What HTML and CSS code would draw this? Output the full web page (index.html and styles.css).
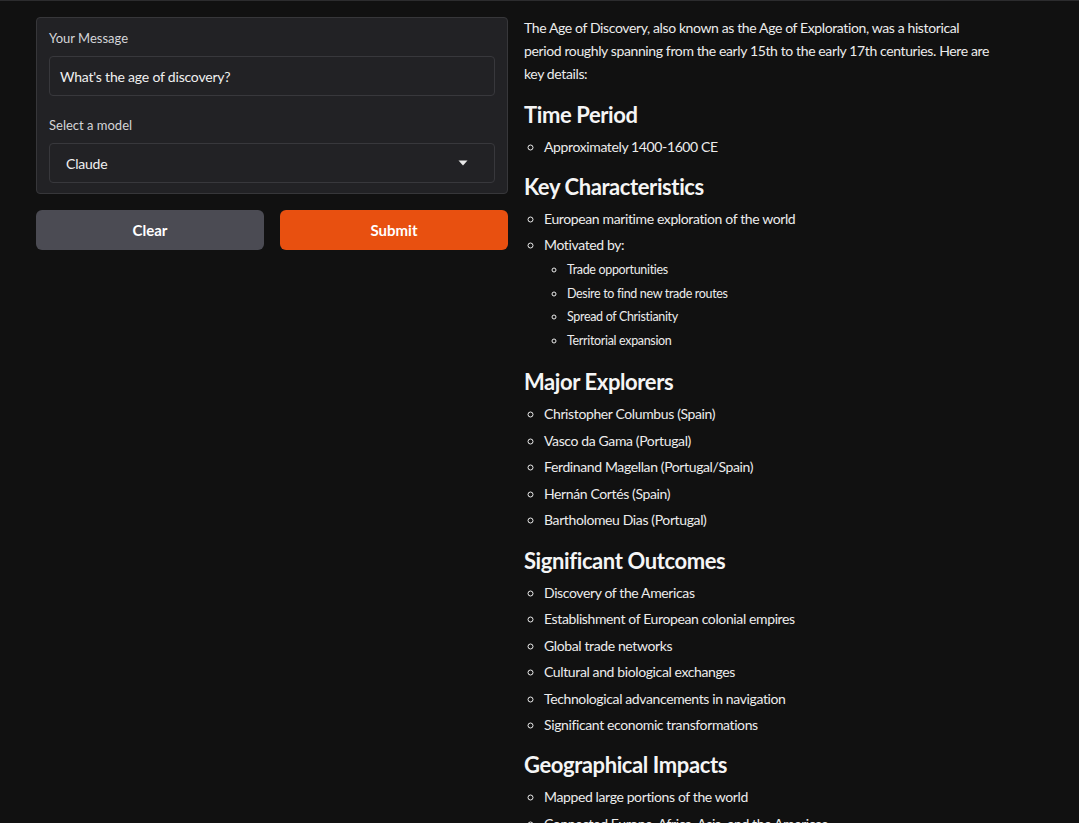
FILE: index.html
```html
<!DOCTYPE html>
<html lang="en">
<head>
<meta charset="utf-8">
<title>Age of Discovery</title>
<link rel="stylesheet" href="styles.css">
</head>
<body>
<div class="app">
  <div class="left">
    <div class="panel">
      <label class="label">Your Message</label>
      <div class="field">What's the age of discovery?</div>
      <label class="label label-2">Select a model</label>
      <div class="field select">
        <span>Claude</span>
        <svg class="caret" width="10" height="6" viewBox="0 0 10 6"><path d="M0.5 0.5 L9.5 0.5 L5 5.5 Z" fill="#e8e8e8"/></svg>
      </div>
    </div>
    <div class="buttons">
      <button class="btn btn-clear">Clear</button>
      <button class="btn btn-submit">Submit</button>
    </div>
  </div>
  <div class="prose">
    <p>The Age of Discovery, also known as the Age of Exploration, was a historical period roughly spanning from the early 15th to the early 17th centuries. Here are key details:</p>
    <h2>Time Period</h2>
    <ul>
      <li>Approximately 1400-1600 CE</li>
    </ul>
    <h2>Key Characteristics</h2>
    <ul>
      <li>European maritime exploration of the world</li>
      <li>Motivated by:
        <ul>
          <li>Trade opportunities</li>
          <li>Desire to find new trade routes</li>
          <li>Spread of Christianity</li>
          <li>Territorial expansion</li>
        </ul>
      </li>
    </ul>
    <h2>Major Explorers</h2>
    <ul>
      <li>Christopher Columbus (Spain)</li>
      <li>Vasco da Gama (Portugal)</li>
      <li>Ferdinand Magellan (Portugal/Spain)</li>
      <li>Hernán Cortés (Spain)</li>
      <li>Bartholomeu Dias (Portugal)</li>
    </ul>
    <h2>Significant Outcomes</h2>
    <ul>
      <li>Discovery of the Americas</li>
      <li>Establishment of European colonial empires</li>
      <li>Global trade networks</li>
      <li>Cultural and biological exchanges</li>
      <li>Technological advancements in navigation</li>
      <li>Significant economic transformations</li>
    </ul>
    <h2>Geographical Impacts</h2>
    <ul>
      <li>Mapped large portions of the world</li>
      <li>Connected Europe, Africa, Asia, and the Americas</li>
    </ul>
  </div>
</div>
</body>
</html>
```

FILE: styles.css
```css
html, body {
  margin: 0;
  padding: 0;
  background: #111111;
}
body {
  border-top: 1px solid #2c2c2e;
  font-family: Lato, "Open Sans", sans-serif;
  color: #e8e8e8;
  height: 822px;
  overflow: hidden;
}
.app {
  display: grid;
  grid-template-columns: 472px 472px;
  column-gap: 16px;
  padding: 14px 36px 0 36px;
  align-items: start;
}
.left {
  padding-top: 2px;
}
.panel {
  background: #222225;
  border: 1px solid #37373a;
  border-radius: 4px;
  padding: 10px 12px 10px 12px;
  display: flex;
  flex-direction: column;
}
.label {
  font-size: 13px;
  line-height: 20px;
  color: #d4d4d8;
}
.label-2 {
  margin-top: 19px;
}
.field {
  margin-top: 8px;
  height: 38px;
  border: 1px solid #38383c;
  border-radius: 4px;
  background: #222225;
  display: flex;
  align-items: center;
  padding: 0 10px;
  font-size: 14px;
  letter-spacing: -0.2px;
  color: #f0f0f0;
}
.select {
  margin-top: 8px;
  padding: 0 26px 0 16px;
  justify-content: space-between;
}
.caret {
  display: block;
}
.buttons {
  display: flex;
  gap: 16px;
  margin-top: 16px;
}
.btn {
  flex: 1;
  height: 40px;
  border: none;
  border-radius: 6px;
  font-family: Lato, "Open Sans", sans-serif;
  font-weight: 700;
  font-size: 15px;
  color: #ffffff;
}
.btn-clear {
  background: #4b4b53;
}
.btn-submit {
  background: #e85010;
}
.prose {
  font-size: 14px;
  letter-spacing: -0.38px;
  color: #ececec;
}
.prose p {
  margin: 0 0 16px 0;
  line-height: 23px;
  padding-top: 0.5px;
}
.prose h2 {
  font-size: 22px;
  line-height: 28px;
  font-weight: 700;
  letter-spacing: -0.4px;
  color: #f5f5f5;
  margin: 13px 0 4.75px 0;
}
.prose ul {
  margin: 0;
  padding-left: 20px;
  list-style: circle;
}
.prose li {
  line-height: 22px;
  padding: 2.25px 0;
}
.prose li ul {
  padding-left: 23px;
  margin-top: 2px;
  font-size: 12.5px;
  letter-spacing: -0.33px;
}
.prose li li {
  line-height: 20px;
  padding: 1.85px 0;
}
```
